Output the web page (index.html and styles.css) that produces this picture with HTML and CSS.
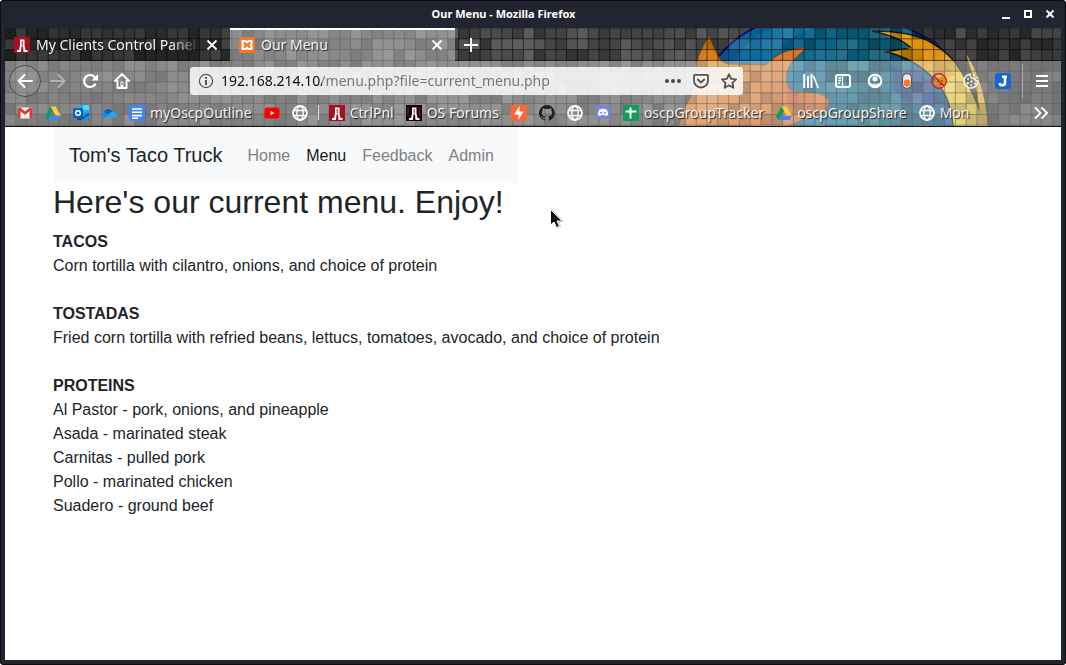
FILE: index.html
```html
<!DOCTYPE html>
<html lang="en">
<head>
<meta charset="utf-8">
<meta name="viewport" content="width=device-width, initial-scale=1">
<title>Our Menu</title>
<link rel="stylesheet" href="styles.css">
</head>
<body>
<svg class="defs" aria-hidden="true">
  <symbol id="globe" viewBox="0 0 16 16"><g fill="none" stroke="#fff" stroke-width="1.4"><circle cx="8" cy="8" r="7" stroke-width="1.8"/><ellipse cx="8" cy="8" rx="3.2" ry="7"/><path d="M1.6 5.5h12.8M1.6 10.5h12.8"/></g></symbol>
  <symbol id="drive" viewBox="0 0 16 16"><path fill="#0f9d58" d="M5.6 1.5 0 11.2 2.7 15 8.2 5.7z"/><path fill="#ffcd40" d="M5.6 1.5h5l5.4 9.3h-5.2z"/><path fill="#4285f4" d="M5.2 10.8H16L13.4 15H2.7z"/></symbol>
  <symbol id="close" viewBox="0 0 12 12"><path d="m1.5 1.5 9 9m0-9-9 9" stroke="#fff" stroke-width="1.8" fill="none"/></symbol>
  <symbol id="tower" viewBox="0 0 16 16"><path fill="#fff" d="M6 2.500h4.500v6l1 4.500h2v2H9.500L9 9.500H7.500L7 15H3v-2h2l1-4.500z"/><path fill="#a01020" d="M7.700 4h1v4.500h-1z"/></symbol>
</svg>
<div class="window">
  <header class="titlebar">
    <span class="title">Our Menu - Mozilla Firefox</span>
    <div class="window-buttons">
      <button aria-label="Minimize"><svg width="8" height="10" viewBox="0 0 8 10"><path fill="#fff" d="M0 8h8v2H0z"/></svg></button>
      <button aria-label="Maximize"><svg width="8" height="10" viewBox="0 0 8 10"><path fill="none" stroke="#fff" stroke-width="2" d="M1 2h6v6H1z"/></svg></button>
      <button aria-label="Close window"><svg width="8" height="10" viewBox="0 0 8 10"><path fill="none" stroke="#fff" stroke-width="2" d="m.5 1.500 7 7m0-7-7 7"/></svg></button>
    </div>
  </header>

  <div class="chrome">
    <svg class="theme" viewBox="5 28 1056 98" preserveAspectRatio="xMaxYMin slice" aria-hidden="true">
      <defs>
        <linearGradient id="base"><stop offset="0" stop-color="#393939"/><stop offset=".35" stop-color="#4c4c4c"/><stop offset=".65" stop-color="#484848"/><stop offset="1" stop-color="#303030"/></linearGradient>
        <linearGradient id="blue"><stop offset="0" stop-color="#0b5796"/><stop offset=".3" stop-color="#086592"/><stop offset=".6" stop-color="#085c73"/><stop offset="1" stop-color="#0a4d90"/></linearGradient>
        <linearGradient id="orange" x2="1" y2="1"><stop offset="0" stop-color="#c87a14"/><stop offset=".5" stop-color="#d2752b"/><stop offset="1" stop-color="#c8541c"/></linearGradient>
        <linearGradient id="tail" x2="1" y2="1"><stop offset="0" stop-color="#eda90c"/><stop offset=".4" stop-color="#d88a06"/><stop offset=".6" stop-color="#edc53a"/><stop offset="1" stop-color="#c0b020"/></linearGradient>
      </defs>
      <path fill="url(#base)" d="M5 28h1056v98H5z"/>
      <path fill="url(#blue)" stroke="#130a68" stroke-width="2" d="M712 66C722 50 738 36 756 27H905L935 42 962 76 980 128H770z"/>
      <path fill="#1a2f78" opacity=".7" d="M892 66l12 6 8-4 18 14 12 22-14 4-10-8-12 2-12-12z"/>
      <path fill="#157cad" opacity=".5" d="M735 62c10-18 22-28 38-34h40c-22 8-34 18-44 36z"/>
      <path fill="url(#orange)" stroke="#6b3d10" d="M678 128C680 118 684 108 690 98C695 86 694 74 697 61C700 51 704 43 709 36C713 43 715 51 719 57C722 62 726 64 730 64L766 65C775 55 788 48 807 48C797 56 789 63 787 73C785 85 789 91 797 92C811 91 823 93 829 100C830 110 822 114 814 116C804 120 793 122 787 128Z"/>
      <path fill="#b9342a" opacity=".55" d="M787 82c3 8 8 10 12 11l-4 17-8-8z"/>
      <path fill="#e88008" opacity=".5" d="M703 66c0-10 3-18 6-24 4 8 8 18 16 24z"/>
      <path fill="url(#tail)" stroke="#15110a" stroke-width="1.500" d="M872 31c20 0 44 2 60 12 20 12 28 24 36 41 9 17 14 31 16 44h-31c-1-18-5-34-18-48-12-13-26-23-49-28 10-3 18-3 25-4-8-8-20-13-39-17z"/>
      <path fill="#df8f08" opacity=".6" d="M905 47c24 2 40 15 51 29l-13 1c-10-14-20-21-38-30z"/>
      <path fill="#d6a81d" d="M966 54c10 14 20 39 22 74h-8c1-30-7-52-14-74z"/>
      <g id="tiles"></g>
    </svg>

    <div class="chrome-rows">
      <div class="tabs">
        <div class="tab">
          <svg class="icon" viewBox="0 0 16 16"><path fill="#a90f1e" d="M0 0h16v16H0z"/><use href="#tower"/></svg>
          <span class="tab-label faded">My Clients Control Panel</span>
          <button aria-label="Close tab"><svg width="12" height="12"><use href="#close"/></svg></button>
        </div>
        <div class="tab selected">
          <svg class="icon" viewBox="0 0 16 16"><rect width="16" height="16" rx="2" fill="#f37726"/><path fill="none" stroke="#fff" stroke-width="2" stroke-linejoin="round" d="M3.500 4h3L8 5.500 9.500 4h3v3l-1 1 1 1v3h-3L8 10.500 6.500 12h-3V9l1-1-1-1z"/></svg>
          <span class="tab-label">Our Menu</span>
          <button aria-label="Close tab"><svg width="12" height="12"><use href="#close"/></svg></button>
        </div>
        <button class="new-tab" aria-label="New tab"><svg width="14" height="14" viewBox="0 0 14 14"><path d="M7 0v14M0 7h14" stroke="#fff" stroke-width="2"/></svg></button>
      </div>

      <nav class="toolbar" aria-label="Navigation">
        <button class="tool back" aria-label="Back"><svg class="icon" viewBox="0 0 16 16"><path fill="none" stroke="#fff" stroke-width="2" stroke-linecap="round" stroke-linejoin="round" d="M15 8H1.500m6-6-6 6 6 6"/></svg></button>
        <button class="tool forward" aria-label="Forward" disabled><svg class="icon" viewBox="0 0 16 16"><path fill="none" stroke="#b4b4b4" stroke-width="2" stroke-linecap="round" stroke-linejoin="round" d="M1 8h13.500m-6-6 6 6-6 6"/></svg></button>
        <button class="tool" aria-label="Reload"><svg class="icon" viewBox="0 0 16 16"><path fill="none" stroke="#fff" stroke-width="2.200" stroke-linecap="round" d="M13 11.500a6 6 0 1 1 .3-6.500"/><path fill="#fff" d="M16 1v6.500H9.500z"/></svg></button>
        <button class="tool" aria-label="Home"><svg class="icon" viewBox="0 0 16 16"><path fill="none" stroke="#fff" stroke-width="2" stroke-linecap="round" stroke-linejoin="round" d="M1 8l7-7 7 7M3.500 8v7h9V8"/><path fill="#fff" d="M6.500 8.500h3V15h-3z"/><path fill="#777" d="M7.500 9.500h1.200V12H7.500z"/></svg></button>
        <div class="urlbar">
          <svg class="icon" viewBox="0 0 16 16"><circle cx="8" cy="8" r="6.600" fill="none" stroke="#555" stroke-width="1.200"/><path stroke="#444" stroke-width="1.800" d="M8 7v5M8 4v1.800"/></svg>
          <input type="text" aria-label="Address" spellcheck="false" value="192.168.214.10/menu.php?file=current_menu.php">
          <button aria-label="Page actions"><svg class="icon" viewBox="0 0 16 16"><g fill="#4a4a4a"><circle cx="2" cy="8" r="2"/><circle cx="8" cy="8" r="2"/><circle cx="14" cy="8" r="2"/></g></svg></button>
          <button aria-label="Save to Pocket"><svg class="icon" viewBox="0 0 16 16"><g fill="none" stroke="#555" stroke-width="1.800" stroke-linecap="round" stroke-linejoin="round"><path d="M1.800 1.800h12.400q.8 0 .8.800V7.500a7 7 0 0 1-14 0V2.600q0-.8.8-.8z"/><path d="M4.800 6.500 8 9.500l3.200-3"/></g></svg></button>
          <button aria-label="Bookmark this page"><svg class="icon" viewBox="0 0 16 16"><path fill="none" stroke="#555" stroke-width="1.800" stroke-linejoin="round" d="m8 1.200 2.100 4.600 5 .6-3.700 3.400 1 5L8 12.300l-4.400 2.500 1-5L.9 6.400l5-.6z"/></svg></button>
        </div>
        <button class="tool" aria-label="Library"><svg class="icon" viewBox="0 0 16 16"><path stroke="#fff" stroke-width="2" d="M1.200 1v14M5 3v12M8.500 1v14"/><path stroke="#fff" stroke-width="1.600" d="m10.500 3 4.700 12"/></svg></button>
        <button class="tool" aria-label="Sidebar"><svg class="icon" viewBox="0 0 16 16"><rect x="1" y="2" width="14" height="12" rx="2" fill="none" stroke="#fff" stroke-width="2"/><path stroke="#fff" stroke-width="1.300" d="M7.500 2v12M3 5h3M3 7.500h3M3 10h2"/></svg></button>
        <button class="tool" aria-label="Account"><svg class="icon" viewBox="0 0 16 16"><circle cx="8" cy="8" r="6.300" fill="none" stroke="#fff" stroke-width="2"/><circle cx="8" cy="6" r="2.500" fill="#fff"/><path fill="#fff" d="M3 10h10l-2 4H5z"/><path fill="none" stroke="#6b98a3" stroke-width="1.200" d="M4.500 9.500c2 2 5 2 7 0"/></svg></button>
        <button class="tool" aria-label="Proxy switch"><svg class="icon" viewBox="0 0 16 16"><rect x="3.500" y=".7" width="9" height="14.600" rx="4.500" fill="#e8e8e8" stroke="#555"/><circle cx="8" cy="10" r="3.500" fill="#f07a32"/></svg></button>
        <button class="tool" aria-label="Script blocker"><svg class="icon" viewBox="0 0 16 16"><path fill="#e08a1c" d="M2.500 11 4 7l3-1.500L10 4l4-1v5l-1 5-5 .5z"/><path fill="#8a4a10" d="M6 8h1.500v1.500H6zM10 7h1.500v1.500H10zM8 11h3v1H8z"/><path fill="none" stroke="#d4101c" stroke-width="1.300" d="M3 3l10 10M8 .700a7.300 7.300 0 1 1 0 14.600A7.300 7.300 0 0 1 8 .700z"/></svg></button>
        <button class="tool" aria-label="Cookie manager"><svg class="icon" viewBox="0 0 16 16"><path fill="none" stroke="#f4f0e4" stroke-width="1.600" d="M7 1.100a7 7 0 1 0 8 7c-2 .3-3-1-3-2.500C9 6 7 4 7 1.100z"/><g fill="#f4f0e4"><circle cx="5" cy="6" r="1"/><circle cx="8.500" cy="8.500" r="1.200"/><circle cx="4.800" cy="10" r="1.200"/><circle cx="8" cy="12.300" r="1"/><circle cx="11.800" cy="10.500" r="1"/><circle cx="11" cy="2" r="1.100"/><circle cx="14" cy="4.500" r="1"/></g></svg></button>
        <button class="tool" aria-label="Notes"><svg class="icon" viewBox="0 0 16 16"><rect width="16" height="16" rx="3" fill="#1268d0"/><path fill="none" stroke="#fff" stroke-width="2.600" d="M7 3.800h5M10 3v6.500c0 3.500-4.800 3.800-5.500.5"/></svg></button>
        <span class="divider"></span>
        <button class="tool" aria-label="Open menu"><svg class="icon" viewBox="0 0 16 16"><path stroke="#fff" stroke-width="2" d="M2 3h12M2 8h12M2 13h12"/></svg></button>
      </nav>

      <nav class="bookmarks" aria-label="Bookmarks">
        <a href="#" aria-label="Gmail"><svg class="icon" viewBox="0 0 16 16"><path fill="#eee" d="M1 2.500h14v11H1z"/><path fill="#d93d32" d="M1 13.800V3.500L2.500 2 8 6.500 13.500 2 15 3.500v10.300h-2.500V6.200L8 9.800 3.500 6.200v7.600z"/></svg></a>
        <a href="#" aria-label="Drive"><svg class="icon"><use href="#drive"/></svg></a>
        <a href="#" aria-label="Outlook"><svg class="icon" viewBox="0 0 16 16"><path fill="#28a8ea" d="M5 0h11v8H5z"/><path fill="#50d9ff" d="M10 0h6v5h-6z"/><path fill="#1490df" d="M4 8h12v7H4z"/><path fill="#0a4f92" d="m4 8 6 4 6-4v2l-8 5H4z"/><rect y="3" width="10" height="10" rx="1" fill="#0a64b5"/><circle cx="5" cy="8" r="2.300" fill="none" stroke="#fff" stroke-width="1.500"/></svg></a>
        <a href="#" aria-label="OneDrive"><svg class="icon" viewBox="0 0 16 16"><path fill="#0a62b8" d="M3 9a4.500 4.500 0 0 1 8.500-2.500L8 11z"/><path fill="#1490df" d="M3.500 7.200 13 12.500H3a2.700 2.700 0 0 1 .5-5.300z"/><path fill="#28a8ea" d="M8 9.500c1-2.500 4-3.500 5.500-1.800A2.600 2.600 0 0 1 13 13H3z"/></svg></a>
        <a href="#"><svg class="icon" viewBox="0 0 16 16"><rect width="16" height="16" rx="1.500" fill="#4285f4"/><path stroke="#fff" stroke-width="1.600" d="M3 4h10M3 7.300h10M3 10.600h10M3 13.300h6"/></svg>myOscpOutline</a>
        <a href="#" aria-label="YouTube"><svg class="icon" viewBox="0 0 16 16"><rect x=".5" y="2.500" width="15" height="11" rx="3" fill="#f00"/><path fill="#fff" d="M6.500 5.700v4.600l4-2.300z"/></svg></a>
        <a href="#" aria-label="Website"><svg class="icon"><use href="#globe"/></svg></a>
        <span class="mark-divider"></span>
        <a href="#"><svg class="icon" viewBox="0 0 16 16"><path fill="#a90f1e" d="M0 0h16v16H0z"/><use href="#tower"/></svg>CtrlPnl</a>
        <a href="#"><svg class="icon" viewBox="0 0 16 16"><path fill="#160608" d="M0 0h16v16H0z"/><path stroke="#722025" d="M2 2v9M13.500 2v9"/><use href="#tower"/></svg>OS Forums</a>
        <a href="#" aria-label="Burp"><svg class="icon" viewBox="0 0 16 16"><path fill="#ff6633" d="M0 0h16v16H0z"/><path fill="#fff" d="M8.500 1v5.500h4.200L7.500 15V9.500H3.300z"/></svg></a>
        <a href="#" aria-label="GitHub"><svg class="icon" viewBox="0 0 16 16"><path fill="#1b1f23" d="M8 0a8 8 0 0 0-2.500 15.600c.4.100.5-.2.500-.4v-1.400c-2.200.5-2.700-1-2.700-1-.4-.9-.9-1.200-.9-1.200-.7-.5.1-.5.1-.5.800.1 1.200.8 1.200.8.700 1.300 1.900.9 2.300.7.100-.5.300-.9.500-1.100-1.800-.2-3.600-.9-3.600-4 0-.8.300-1.500.8-2.100-.1-.2-.4-1 .1-2.100 0 0 .7-.2 2.200.8a7.600 7.600 0 0 1 4 0c1.500-1 2.200-.8 2.200-.8.400 1.100.2 1.900.1 2.100.5.600.8 1.300.8 2.100 0 3.100-1.900 3.700-3.700 3.900.300.300.6.800.6 1.500v2.200c0 .2.100.5.500.400A8 8 0 0 0 8 0z"/></svg></a>
        <a href="#" aria-label="Website"><svg class="icon"><use href="#globe"/></svg></a>
        <a href="#" aria-label="Discord"><svg class="icon" viewBox="0 0 16 16"><path fill="#7289da" d="M3 .500h10.500q1.500 0 1.500 1.500v14l-2.500-2.200H2.700Q1 13.800 1 12V2Q1 .500 3 .500z"/><path fill="#fff" d="M4.500 4.500c2-1 5-1 7 0 1.200 2 1.700 3.700 1.500 5.500-1 .8-2 1-2.500 1l-.7-1H6.200l-.7 1c-.5 0-1.500-.2-2.500-1-.2-1.800.3-3.500 1.500-5.500z"/><g fill="#7289da"><circle cx="6.200" cy="7.700" r="1"/><circle cx="9.800" cy="7.700" r="1"/></g></svg></a>
        <a href="#"><svg class="icon" viewBox="0 0 16 16"><rect width="16" height="16" rx="1" fill="#0f9d58"/><path stroke="#fff" stroke-width="2" d="M7.500 2.500v11M2.500 6.500h11"/></svg>oscpGroupTracker</a>
        <a href="#"><svg class="icon"><use href="#drive"/></svg>oscpGroupShare</a>
        <a href="#"><svg class="icon"><use href="#globe"/></svg>Mon</a>
        <button class="overflow" aria-label="More bookmarks"><svg class="icon" viewBox="0 0 16 16"><path fill="none" stroke="#fff" stroke-width="2" d="m2 2.500 5.500 5.500L2 13.500m6.500-11L14 8l-5.500 5.500"/></svg></button>
      </nav>
    </div>
  </div>

  <main class="page">
    <nav class="navbar">
      <a class="brand" href="#">Tom's Taco Truck</a>
      <a class="nav-link" href="#">Home</a>
      <a class="nav-link active" href="#">Menu</a>
      <a class="nav-link" href="#">Feedback</a>
      <a class="nav-link" href="#">Admin</a>
    </nav>
    <h1>Here's our current menu. Enjoy!</h1>
    <section>
      <h2>TACOS</h2>
      <p>Corn tortilla with cilantro, onions, and choice of protein</p>
    </section>
    <section>
      <h2>TOSTADAS</h2>
      <p>Fried corn tortilla with refried beans, lettucs, tomatoes, avocado, and choice of protein</p>
    </section>
    <section>
      <h2>PROTEINS</h2>
      <p>Al Pastor - pork, onions, and pineapple</p>
      <p>Asada - marinated steak</p>
      <p>Carnitas - pulled pork</p>
      <p>Pollo - marinated chicken</p>
      <p>Suadero - ground beef</p>
    </section>
  </main>
</div>
<svg class="pointer" width="14" height="21" viewBox="0 0 14 21" aria-hidden="true"><path fill="#111" stroke="#fff" stroke-width="1" d="M.500.500v15.500l3.500-3 2.500 5.500 3-1.300L7 12h5z"/><path fill="none" stroke="#999" stroke-width=".6" d="m1 0 12 12.300-4.500.3 2 4.900-4 1.500"/></svg>
<script src="theme.js"></script>
</body>
</html>
```

FILE: styles.css
```css
* { box-sizing: border-box; }

body {
  margin: 0;
  background: #fff;
  color: #212529;
  font: 16px/24px "Liberation Sans", Arial, sans-serif;
}

button {
  display: flex;
  align-items: center;
  justify-content: center;
  padding: 0;
  border: 0;
  background: none;
}

a { color: inherit; text-decoration: none; }
h1, h2, p { margin: 0; }

.defs { position: absolute; width: 0; height: 0; }
.icon { width: 16px; height: 16px; flex: none; }

/* Window frame */
.window {
  display: flex;
  flex-direction: column;
  min-height: 100vh;
  padding: 0 5px 5px;
  border-radius: 4px;
  background: #22252f;
  box-shadow: inset 0 0 0 1px #0c0d11;
}

.titlebar {
  display: flex;
  align-items: center;
  height: 28px;
  color: #fff;
  font: bold 11px/16px "Noto Sans", sans-serif;
}
.title { flex: 1; text-align: center; }
.window-buttons { display: flex; gap: 14px; padding-right: 7px; }

/* Browser chrome */
.chrome {
  display: grid;
  overflow: hidden;
  border-bottom: 1px solid #111;
  color: #f4f4f4;
  font: 14px/20px "Noto Sans", sans-serif;
}
.theme, .chrome-rows { grid-area: 1 / 1; min-width: 0; }
.theme { width: 100%; height: 98px; }
.chrome-rows { z-index: 1; text-shadow: 1px 1px 1px #222; }

.tabs { display: flex; height: 33px; }
.tab {
  display: flex;
  align-items: center;
  gap: 6px;
  width: 225px;
  padding: 0 12px 0 9px;
  background: rgba(0, 0, 0, .25);
}
.tab.selected {
  background: rgba(255, 255, 255, .36);
  box-shadow: inset 0 2px #fff;
}
.tab-label { flex: 1; min-width: 0; overflow: hidden; white-space: nowrap; }
.faded { mask-image: linear-gradient(90deg, #000 82%, transparent); }
.new-tab { width: 32px; }

.toolbar {
  display: flex;
  align-items: center;
  height: 40px;
  padding: 0 3px 0 4px;
  background: rgba(255, 255, 255, .36);
}
.tool { width: 32px; height: 32px; flex: none; }
.back {
  margin-right: 1px;
  border: 1px solid #4c4c4c;
  border-radius: 50%;
  background: rgba(255, 255, 255, .1);
}
.urlbar {
  display: flex;
  flex: 1;
  align-items: center;
  gap: 12px;
  min-width: 0;
  height: 28px;
  margin: 0 52px;
  padding: 0 6px 0 8px;
  border-radius: 3px;
  background: rgba(255, 255, 255, .84);
}
.urlbar input {
  flex: 1;
  min-width: 0;
  margin-left: -5px;
  padding: 0;
  border: 0;
  outline: 0;
  color: transparent;
  background: linear-gradient(90deg, #0c0c0d 101px, #737373 101px);
  background-clip: text;
  font: 14px/20px "Noto Sans", sans-serif;
  text-shadow: none;
}
.divider { width: 1px; height: 34px; margin: 0 3px; background: #aaa; }

.bookmarks {
  display: flex;
  align-items: center;
  height: 25px;
  padding: 0 6px 2px;
  background: rgba(255, 255, 255, .36);
  white-space: nowrap;
}
.bookmarks a { display: flex; align-items: center; gap: 5px; padding: 0 6px; }
.mark-divider { width: 1px; height: 15px; margin: 0 4px; background: #ddd; }
.overflow { margin-left: auto; padding: 0 6px; }

/* Menu page */
.page { flex: 1; padding: 0 48px; background: #fff; }
.navbar {
  display: flex;
  align-items: center;
  width: fit-content;
  height: 56px;
  padding: 0 16px;
  background: #f8f9fa;
}
.brand { margin-right: 17px; font-size: 20px; line-height: 30px; }
.nav-link { padding: 10px 8px 8px; color: #808081; }
.nav-link.active { color: #161717; }
h1 { margin-bottom: 8px; font-size: 32px; font-weight: 400; line-height: 39px; }
h2 { font-size: 16px; line-height: 24px; }
section { margin-bottom: 24px; }

.pointer { position: absolute; left: 550px; top: 209px; }
```

FILE: theme.js
```js
// Mosaic of shaded tiles laid over the toolbar artwork.
const ns = "http://www.w3.org/2000/svg";
const tiles = document.getElementById("tiles");
const step = 10.8;
let seed = 7;
function random() {
  seed = (seed * 16807) % 2147483647;
  return seed / 2147483647;
}
for (let row = 0; row < 10; row++) {
  for (let col = 0; col < 99; col++) {
    const rect = document.createElementNS(ns, "rect");
    const shade = random();
    rect.setAttribute("x", 5 + col * step);
    rect.setAttribute("y", 28 + row * step);
    rect.setAttribute("width", step);
    rect.setAttribute("height", step);
    rect.setAttribute("fill", shade < 0.5 ? "#000" : "#fff");
    rect.setAttribute("fill-opacity", shade < 0.5 ? (0.5 - shade) * 0.6 : (shade - 0.5) * 0.24);
    rect.setAttribute("stroke", "#000");
    rect.setAttribute("stroke-opacity", 0.3);
    tiles.appendChild(rect);
  }
}
```
